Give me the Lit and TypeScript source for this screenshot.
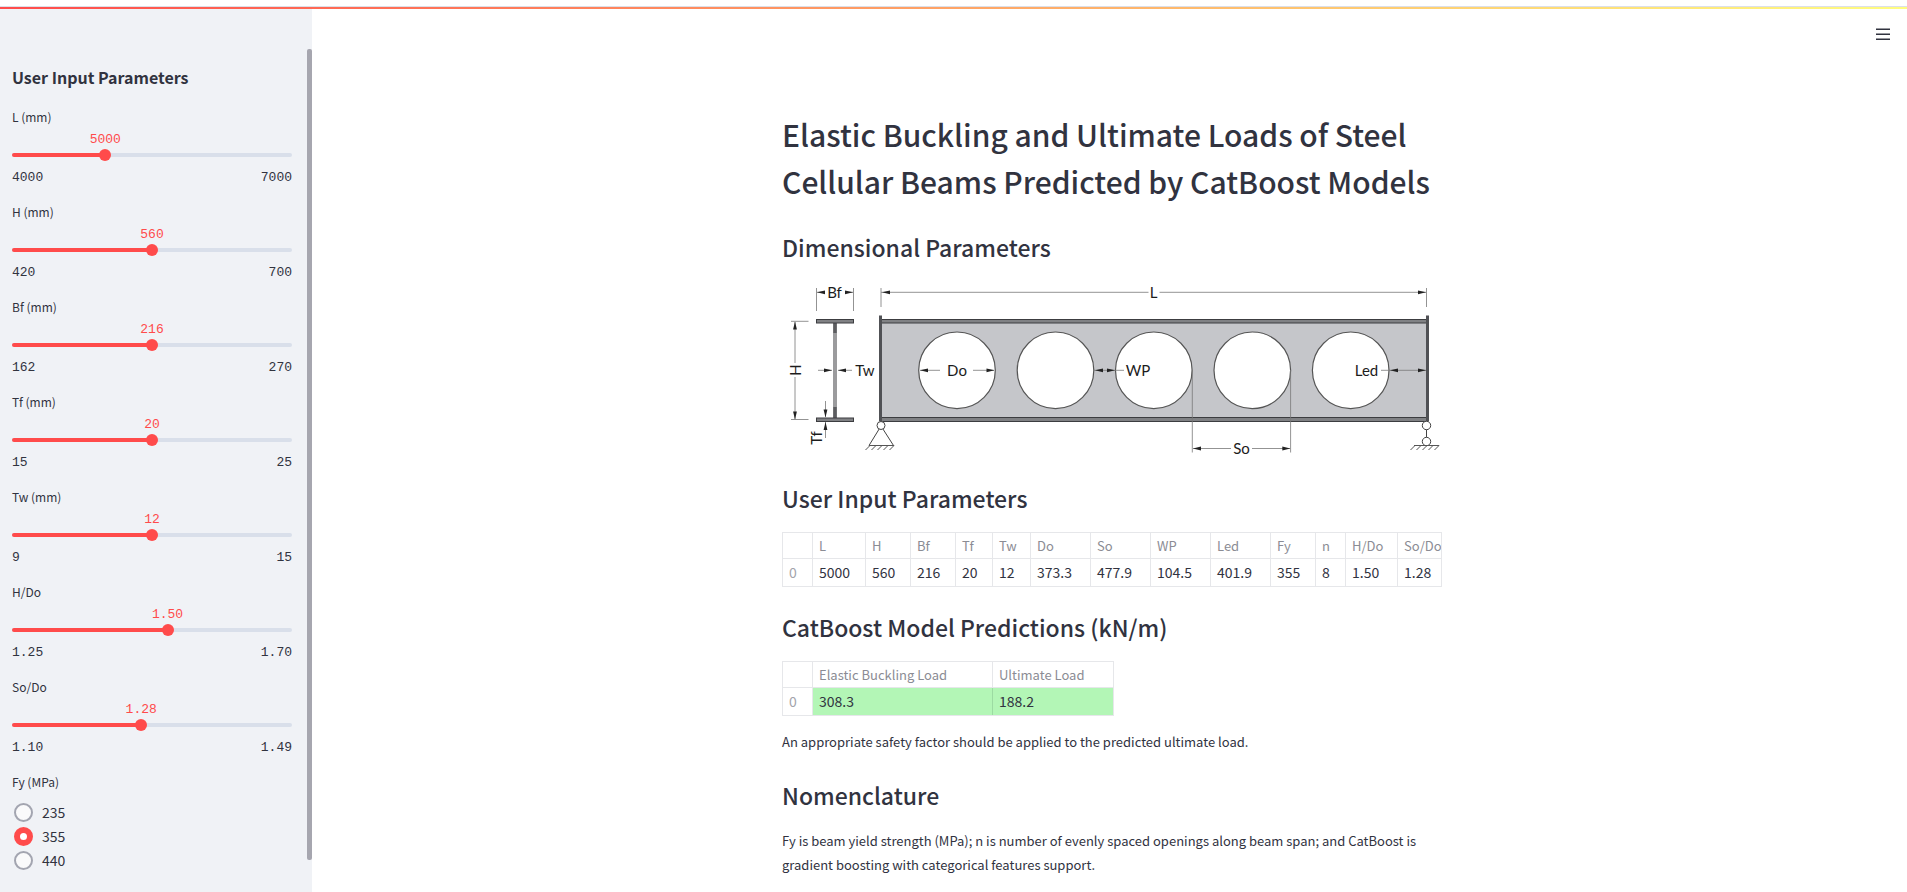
import { LitElement, html, css, svg } from "lit";
import { customElement, state } from "lit/decorators.js";

interface SliderSpec {
  id: string;
  label: string;
  min: number;
  max: number;
  value: number;
  step: number;
  digits: number;
}

@customElement("param-slider")
class ParamSlider extends LitElement {
  static properties = { spec: { attribute: false }, value: { state: true } };
  declare spec: SliderSpec;
  declare value: number | undefined;

  static styles = css`
    :host { display: block; }
    .label { display: block; font-size: 12px; line-height: 20px; color: #31333f; }
    .value-row { height: 19px; margin-top: 3px; }
    .value {
      display: flex; justify-content: center; width: 0;
      font: 13px/20px "Liberation Mono", monospace; color: #ff4b4b;
    }
    .control { display: grid; align-items: center; height: 12px; }
    .track { grid-area: 1 / 1; height: 4px; border-radius: 2px; background: #d9dfea; overflow: hidden; }
    .fill { height: 4px; background: #ff4b4b; }
    .range {
      grid-area: 1 / 1; appearance: none; -webkit-appearance: none; background: none;
      height: 12px; margin: 0 -6px; cursor: pointer; min-width: 0;
    }
    .range::-webkit-slider-thumb {
      -webkit-appearance: none; width: 12px; height: 12px; border-radius: 50%; background: #ff4b4b; border: 0;
    }
    .limits {
      display: flex; justify-content: space-between; margin-top: 7px;
      font: 13px/20px "Liberation Mono", monospace; color: #31333f;
    }
  `;

  render() {
    const s = this.spec;
    const v = this.value ?? s.value;
    const pct = ((v - s.min) / (s.max - s.min)) * 100;
    return html`
      <label class="label" for=${s.id}>${s.label}</label>
      <div class="value-row"><div class="value" style="margin-left:${pct}%">${v.toFixed(s.digits)}</div></div>
      <div class="control">
        <div class="track"><div class="fill" style="width:${pct}%"></div></div>
        <input class="range" id=${s.id} type="range" min=${s.min} max=${s.max} step=${s.step} .value=${String(v)}
          @input=${(e: Event) => (this.value = Number((e.target as HTMLInputElement).value))} />
      </div>
      <div class="limits"><span>${s.min.toFixed(s.digits)}</span><span>${s.max.toFixed(s.digits)}</span></div>
    `;
  }
}

@customElement("beam-diagram")
class BeamDiagram extends LitElement {
  static styles = css`
    :host { display: block; }
    .drawing { display: block; width: 100%; height: auto; }
    .thin { stroke: #777; stroke-width: 0.8; fill: none; }
    .hatch { stroke: #555; stroke-width: 1; fill: none; }
    .head { fill: #222; }
    .plate { fill: #808184; stroke: #3c3d40; stroke-width: 1; }
    .web { fill: #c5c6ca; }
    .hole { fill: #fff; stroke: #555; stroke-width: 1.2; }
    .support { fill: #fff; stroke: #444; stroke-width: 1; }
    .name { font: 15px Lato, sans-serif; fill: #1c1c1c; text-anchor: middle; }
  `;

  private arrow(x: number, y: number, dir: "l" | "r" | "u" | "d") {
    const turn = { r: 0, d: 90, l: 180, u: 270 }[dir];
    return svg`<path class="head" d="M0 0L-8 -1.9V1.9Z" transform="translate(${x} ${y}) rotate(${turn})" />`;
  }

  private ground(x: number) {
    return svg`<path class="hatch" d=${`M${x} 445.5h25` + [1, 7, 13, 19, 25].map((o) => `M${x + o} 445.5l-4.5 4.5`).join("")} />`;
  }

  render() {
    const holes = [957, 1055.5, 1153.8, 1252.3, 1350.7];
    return html`
      <svg class="drawing" viewBox="782 280 660 178" role="img" aria-label="Beam dimensions">
        <path class="thin" d="M816.5 288V311M853.5 288V311M817 292.3H825M845 292.3H853
          M881 288V307M1426.5 288V307M881 292.3H1148.5M1159.5 292.3H1426
          M791 321.3H808.5M791 419.5H808.5M795 322V363M795 377V419
          M818 370.3H832M838 370.3H852M825.5 401V417M825.5 422V438" />
        <rect x="833" y="323" width="4" height="95" fill="#9b9b9d" />
        <path d="M835 323V333M835 407V418" stroke="#5c5d60" stroke-width="3.4" />
        <rect class="plate" x="816.5" y="319.5" width="37" height="3.5" />
        <rect class="plate" x="816.5" y="418" width="37" height="3.5" />
        <rect class="web" x="881" y="323" width="546" height="95" />
        <rect class="plate" x="881" y="319.5" width="546" height="3.5" />
        <rect class="plate" x="881" y="417.5" width="546" height="4" />
        <rect x="879" y="315.5" width="3" height="106" fill="#505155" />
        <rect x="1426" y="315.5" width="3" height="106" fill="#505155" />
        ${holes.map((x) => svg`<circle class="hole" cx=${x} cy="370.3" r="38.3" />`)}
        <path class="thin" d="M920 370.3H940M973 370.3H994M1094 370.3H1124M1381 370.3H1426
          M1192.3 370V452.5M1290.6 370V452.5M1193 448.5H1231M1252 448.5H1290" />
        ${this.arrow(817, 292.3, "l")} ${this.arrow(853, 292.3, "r")}
        ${this.arrow(882, 292.3, "l")} ${this.arrow(1426, 292.3, "r")}
        ${this.arrow(795, 321.5, "u")} ${this.arrow(795, 419.5, "d")}
        ${this.arrow(832, 370.3, "r")} ${this.arrow(838, 370.3, "l")}
        ${this.arrow(825.5, 417.5, "d")} ${this.arrow(825.5, 422, "u")}
        ${this.arrow(920, 370.3, "l")} ${this.arrow(994.5, 370.3, "r")}
        ${this.arrow(1095, 370.3, "l")} ${this.arrow(1115, 370.3, "r")}
        ${this.arrow(1390, 370.3, "l")} ${this.arrow(1426, 370.3, "r")}
        ${this.arrow(1193, 448.5, "l")} ${this.arrow(1290.3, 448.5, "r")}
        <path class="support" d="M881 426L869 445.5H893.5Z" />
        <circle class="support" cx="881" cy="425.5" r="4" />
        <path class="support" d="M1426.5 429V438" />
        <circle class="support" cx="1426.5" cy="425.5" r="4.2" />
        <circle class="support" cx="1426.5" cy="441.5" r="4.2" />
        ${this.ground(869)} ${this.ground(1414)}
        <text class="name" x="834.5" y="298">Bf</text>
        <text class="name" x="1153.5" y="298">L</text>
        <text class="name" x="865" y="376">Tw</text>
        <text class="name" x="957" y="376">Do</text>
        <text class="name" x="1138" y="376">WP</text>
        <text class="name" x="1366.5" y="376">Led</text>
        <text class="name" x="1241.5" y="454">So</text>
        <text class="name" transform="translate(800.5 370) rotate(-90)">H</text>
        <text class="name" transform="translate(822 438) rotate(-90)">Tf</text>
      </svg>
    `;
  }
}

@customElement("app-root")
class AppRoot extends LitElement {
  @state() private fy = "355";

  static styles = css`
    :host {
      display: flex; flex-direction: column; min-height: 100vh; background: #fff; color: #31333f;
      font: 14px/24px "Noto Sans CJK SC", "Open Sans", sans-serif;
    }
    .decoration { height: 2px; margin-top: 6px; border-top: 1px solid #dcdfe8; background: linear-gradient(90deg, #ff4b4b, #fffd80); flex: none; }
    .layout { display: flex; flex: 1; }
    .sidebar { position: relative; width: 312px; margin-right: 5px; flex: none; background: #f0f2f6; box-sizing: border-box; padding: 56px 20px 0 12px; }
    .scroll-thumb { position: absolute; top: 40px; bottom: 32px; right: 0; width: 5px; border-radius: 2px; background: #a6a6af; }
    .side-title { margin: 0 0 18px; font-size: 16px; line-height: 24px; font-weight: 600; }
    .sliders { display: grid; gap: 14px; }
    .radios { border: 0; margin: 14px 0 0; padding: 0; }
    .legend { padding: 0; font-size: 12px; line-height: 20px; margin-bottom: 8px; }
    .choice { display: flex; align-items: center; gap: 9px; padding-left: 2px; height: 24px; }
    .dot {
      appearance: none; -webkit-appearance: none; margin: 0; width: 19px; height: 19px; border-radius: 50%;
      border: 2px solid #a3a5b0; background: #fafafb; box-sizing: border-box;
    }
    .dot:checked { border: 6px solid #ff4b4b; background: #fff; }
    .main { flex: 1; min-width: 0; position: relative; padding: 102px 24px 8px; }
    .menu { position: absolute; top: 15px; right: 14px; width: 20px; height: 20px; padding: 3px; border: 0; background: none; }
    .menu-icon { display: block; width: 14px; height: 14px; }
    .content { max-width: 660px; margin: 0 auto; }
    .title { margin: 0; font-size: 30px; line-height: 47px; font-weight: 500; }
    .heading { margin: 0; font-size: 23px; line-height: 32px; font-weight: 500; }
    .first { margin-top: 26px; }
    .figure { margin: 17px 0 24px; }
    .frame { overflow: hidden; border: 1px solid #e6e7ea; width: fit-content; max-width: 100%; box-sizing: border-box; margin: 18px 0 24px; }
    .grid { table-layout: fixed; border-collapse: separate; border-spacing: 0; }
    .cell { box-sizing: border-box; padding: 0 6px; text-align: left; font-weight: 400; white-space: nowrap; border-right: 1px solid #e6e7ea; line-height: 25px; height: 27px; }
    .head { font-size: 13px; color: #8b8c94; border-bottom: 1px solid #e6e7ea; height: 26px; }
    .index { color: #a3a4ab; }
    .cell:last-child { border-right: 0; }
    .good { background: #b3f6b6; border-right-color: #9cdba2; }
    .text { margin: 0; font-size: 13px; }
    .note { margin-top: -10px; margin-bottom: 25px; }
    .last { margin-top: 18px; }
  `;

  private sliders: SliderSpec[] = [
    { id: "l", label: "L (mm)", min: 4000, max: 7000, value: 5000, step: 1, digits: 0 },
    { id: "h", label: "H (mm)", min: 420, max: 700, value: 560, step: 1, digits: 0 },
    { id: "bf", label: "Bf (mm)", min: 162, max: 270, value: 216, step: 1, digits: 0 },
    { id: "tf", label: "Tf (mm)", min: 15, max: 25, value: 20, step: 1, digits: 0 },
    { id: "tw", label: "Tw (mm)", min: 9, max: 15, value: 12, step: 1, digits: 0 },
    { id: "hdo", label: "H/Do", min: 1.25, max: 1.7, value: 1.5, step: 0.01, digits: 2 },
    { id: "sodo", label: "So/Do", min: 1.1, max: 1.49, value: 1.28, step: 0.01, digits: 2 },
  ];

  private inputs: [string, string, number][] = [
    ["L", "5000", 53], ["H", "560", 45], ["Bf", "216", 45], ["Tf", "20", 37], ["Tw", "12", 38],
    ["Do", "373.3", 60], ["So", "477.9", 60], ["WP", "104.5", 60], ["Led", "401.9", 60],
    ["Fy", "355", 45], ["n", "8", 30], ["H/Do", "1.50", 52], ["So/Do", "1.28", 60],
  ];

  private results: [string, string, number][] = [
    ["Elastic Buckling Load", "308.3", 180], ["Ultimate Load", "188.2", 120],
  ];

  private table(cols: [string, string, number][], tone: string) {
    const total = 30 + cols.reduce((sum, c) => sum + c[2], 0);
    return html`
      <div class="frame">
        <table class="grid" style="width:${total}px">
          <colgroup><col style="width:30px" />${cols.map((c) => html`<col style="width:${c[2]}px" />`)}</colgroup>
          <thead><tr><td class="cell head"></td>${cols.map((c) => html`<th class="cell head" scope="col">${c[0]}</th>`)}</tr></thead>
          <tbody><tr><th class="cell index" scope="row">0</th>${cols.map((c) => html`<td class="cell ${tone}">${c[1]}</td>`)}</tr></tbody>
        </table>
      </div>
    `;
  }

  render() {
    return html`
      <div class="decoration"></div>
      <div class="layout">
        <aside class="sidebar">
          <h2 class="side-title">User Input Parameters</h2>
          <div class="sliders">${this.sliders.map((s) => html`<param-slider .spec=${s}></param-slider>`)}</div>
          <fieldset class="radios">
            <legend class="legend">Fy (MPa)</legend>
            ${["235", "355", "440"].map((v) => html`
              <label class="choice">
                <input class="dot" type="radio" name="fy" value=${v} .checked=${this.fy === v} @change=${() => (this.fy = v)} />
                <span>${v}</span>
              </label>`)}
          </fieldset>
          <div class="scroll-thumb"></div>
        </aside>
        <main class="main">
          <button class="menu" aria-label="Menu">
            <svg class="menu-icon" viewBox="0 0 14 14"><path d="M0 2.2h14M0 7.2h14M0 12.2h14" stroke="#31333f" stroke-width="1.6" /></svg>
          </button>
          <div class="content">
            <h1 class="title">Elastic Buckling and Ultimate Loads of Steel Cellular Beams Predicted by CatBoost Models</h1>
            <h2 class="heading first">Dimensional Parameters</h2>
            <beam-diagram class="figure"></beam-diagram>
            <h2 class="heading">User Input Parameters</h2>
            ${this.table(this.inputs, "")}
            <h2 class="heading">CatBoost Model Predictions (kN/m)</h2>
            ${this.table(this.results, "good")}
            <p class="text note">An appropriate safety factor should be applied to the predicted ultimate load.</p>
            <h2 class="heading">Nomenclature</h2>
            <p class="text last">Fy is beam yield strength (MPa); n is number of evenly spaced openings along beam span; and CatBoost is gradient boosting with categorical features support.</p>
          </div>
        </main>
      </div>
    `;
  }
}
